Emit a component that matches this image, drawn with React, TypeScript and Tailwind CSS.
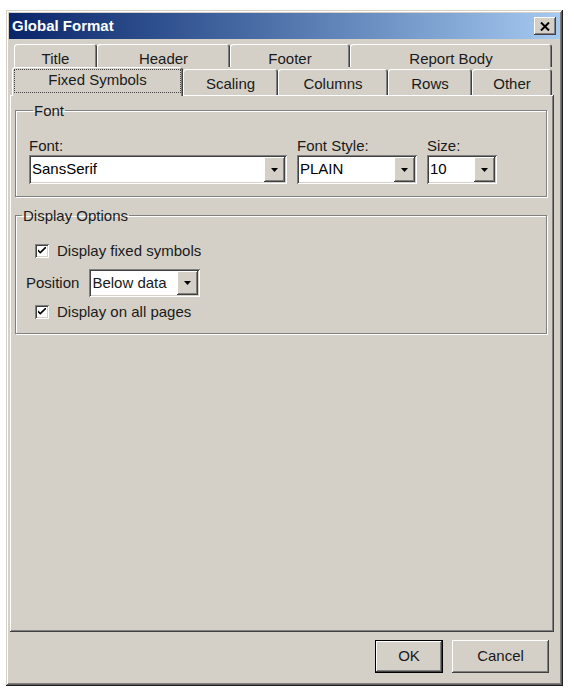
import React from "react";

const raised =
  "shadow-[inset_-1px_-1px_#404040,inset_1px_1px_#ffffff,inset_-2px_-2px_#808080,inset_2px_2px_#d4d0c8]";
const sunken =
  "shadow-[inset_1px_1px_#808080,inset_-1px_-1px_#ffffff,inset_2px_2px_#404040,inset_-2px_-2px_#d4d0c8]";
const etched = "border border-[#808080] shadow-[inset_1px_1px_#ffffff,1px_1px_#ffffff]";

const ArrowButton = () => (
  <div className={`flex h-full w-[21px] items-center justify-center bg-[#d4d0c8] ${raised}`}>
    <svg width="7" height="4" viewBox="0 0 7 4">
      <path d="M0 0h7L3.5 4z" fill="#000" />
    </svg>
  </div>
);

const Combo = ({ value, width }: { value: string; width: string }) => (
  <div className={`flex h-[29px] ${width} bg-white p-[2px] ${sunken}`}>
    <div className="flex flex-1 items-center pl-[1px] text-black">{value}</div>
    <ArrowButton />
  </div>
);

const CheckBox = ({ label }: { label: string }) => (
  <div className="flex h-[20px] items-center gap-[8px] pl-[19px]">
    <div className={`flex h-[14px] w-[14px] items-center justify-center bg-white ${sunken}`}>
      <svg width="8" height="8" viewBox="0 0 7 7">
        <path d="M0 2v2l2 2 5-5V-1L2 4z" fill="#000" />
      </svg>
    </div>
    <span>{label}</span>
  </div>
);

const backTab =
  "flex h-[23px] shrink-0 justify-center overflow-hidden rounded-t-[3px] pt-[6px] leading-[17px] shadow-[inset_1px_1px_#ffffff,inset_-1px_0_#404040,inset_-2px_0_#808080]";
const frontTab =
  "flex h-[26px] shrink-0 justify-center rounded-t-[3px] pt-[6px] leading-[17px] shadow-[inset_1px_1px_#ffffff,inset_-1px_0_#404040,inset_-2px_0_#808080]";

export default function App() {
  const row1 = [
    { name: "Title", w: "w-[83px]" },
    { name: "Header", w: "w-[133px]" },
    { name: "Footer", w: "w-[120px]" },
    { name: "Report Body", w: "w-[202px]" },
  ];
  const row2 = [
    { name: "Scaling", w: "w-[95px]" },
    { name: "Columns", w: "w-[110px]" },
    { name: "Rows", w: "w-[84px]" },
    { name: "Other", w: "w-[80px]" },
  ];

  return (
    <div className="min-h-screen bg-white pl-[6px] pt-[10px] font-['Liberation_Sans',Arial,sans-serif] text-[15px] text-[#1a1a1a]">
      <div className="flex h-[676px] w-[557px] flex-col bg-[#d4d0c8] p-[3px] shadow-[inset_-1px_-1px_#202020,inset_1px_1px_#d4d0c8,inset_-2px_-2px_#606060,inset_2px_2px_#ffffff,inset_-3px_-3px_#808080]">
        {/* title bar */}
        <div className="flex h-[26px] items-center justify-between bg-gradient-to-r from-[#0a246a] to-[#a6caf0] pl-[3px] pr-[4px]">
          <span className="font-bold text-white">Global Format</span>
          <div className={`flex h-[18px] w-[22px] items-center justify-center bg-[#d4d0c8] ${raised}`}>
            <svg width="10" height="9" viewBox="0 0 10 9">
              <path d="M1 0.5 9 8.5M9 0.5 1 8.5" stroke="#000" strokeWidth="2" />
            </svg>
          </div>
        </div>

        {/* tabs */}
        <div className="ml-[1px] mt-[5px] flex flex-col">
          <div className="flex pl-[4px]">
            {row1.map((t) => (
              <div key={t.name} className={`${backTab} ${t.w}`}>
                {t.name}
              </div>
            ))}
          </div>
          <div className="flex h-[28px] items-end pl-[2px]">
            <div className="relative z-10 -mb-px flex h-[29px] w-[171px] shrink-0 rounded-t-[3px] bg-[#d4d0c8] p-[2px] pb-[3px] leading-[17px] shadow-[inset_1px_1px_#ffffff,inset_-1px_0_#404040,inset_-2px_0_#808080]">
              <div className="flex flex-1 justify-center border border-dotted border-[#444] pt-[1px]">
                Fixed Symbols
              </div>
            </div>
            {row2.map((t) => (
              <div key={t.name} className={`${frontTab} ${t.w}`}>
                {t.name}
              </div>
            ))}
          </div>
        </div>

        {/* panel */}
        <div className="ml-[1px] flex w-[544px] flex-1 flex-col border-b border-r border-b-[#404040] border-r-[#404040] pl-[5px] shadow-[inset_1px_1px_#ffffff,inset_-1px_-1px_#808080]">
          <fieldset className={`mt-[7px] w-[532px] ${etched} pb-[12px] pl-[13px]`}>
            <legend className="ml-[4px] px-[1px] leading-[17px]">Font</legend>
            <div className="mt-[18px] flex gap-[10px]">
              <div className="flex flex-col gap-[1px]">
                <span className="leading-[17px]">Font:</span>
                <Combo value="SansSerif" width="w-[258px]" />
              </div>
              <div className="flex flex-col gap-[1px]">
                <span className="leading-[17px]">Font Style:</span>
                <Combo value="PLAIN" width="w-[120px]" />
              </div>
              <div className="flex flex-col gap-[1px]">
                <span className="leading-[17px]">Size:</span>
                <Combo value="10" width="w-[70px]" />
              </div>
            </div>
          </fieldset>

          <fieldset className={`mt-[10px] w-[532px] ${etched} pb-[11px]`}>
            <legend className="ml-[6px] px-[1px] leading-[17px]">Display Options</legend>
            <div className="mt-[17px] flex flex-col">
              <CheckBox label="Display fixed symbols" />
              <div className="mt-[8px] flex items-center gap-[10px] pl-[10px]">
                <span>Position</span>
                <div className={`flex h-[28px] w-[111px] bg-white p-[2px] ${sunken}`}>
                  <div className="flex flex-1 items-center pl-[1px]">Below data</div>
                  <ArrowButton />
                </div>
              </div>
              <div className="mt-[5px]">
                <CheckBox label="Display on all pages" />
              </div>
            </div>
          </fieldset>
        </div>

        {/* buttons */}
        <div className="flex h-[51px] shrink-0 items-start justify-end gap-[9px] pr-[11px] pt-[8px]">
          <div className="h-[33px] w-[68px] border border-black">
            <div className={`flex h-full w-full items-center justify-center ${raised}`}>OK</div>
          </div>
          <div className={`flex h-[33px] w-[97px] items-center justify-center ${raised}`}>Cancel</div>
        </div>
      </div>
    </div>
  );
}
